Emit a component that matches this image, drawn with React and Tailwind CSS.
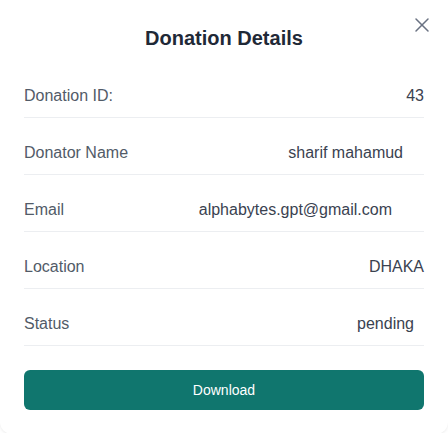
import React from 'react';
import { X } from 'lucide-react';

const rows = [
  { label: 'Donation ID:', value: '43', pad: 'mr-0' },
  { label: 'Donator Name', value: 'sharif mahamud', pad: 'mr-[21px]' },
  { label: 'Email', value: 'alphabytes.gpt@gmail.com', pad: 'mr-[32px]' },
  { label: 'Location', value: 'DHAKA', pad: 'mr-0' },
  { label: 'Status', value: 'pending', pad: 'mr-[10px]' },
];

export default function App() {
  return (
    <div className="min-h-screen w-full bg-white font-['Liberation_Sans',Arial,sans-serif]">
      <div className="relative w-[448px] bg-white rounded-b-xl shadow-[0_1px_3px_rgba(0,0,0,0.08)] px-6 pt-6 pb-6">
        {/* Close button */}
        <button type="button" className="absolute right-[14px] top-[13px] text-gray-500">
          <X className="h-6 w-6" strokeWidth={1.5} />
        </button>

        <h2 className="text-xl leading-7 font-bold text-[#1f2937] text-center">Donation Details</h2>

        <div className="mt-[32px] flex flex-col gap-[23px]">
          {rows.map((row) => (
            <div key={row.label} className="flex items-center justify-between pb-[9px] border-b border-[#eceef1] text-base leading-6">
              <span className="text-[#525b68]">{row.label}</span>
              <span className={`text-[#3a4250] ${row.pad}`}>{row.value}</span>
            </div>
          ))}
        </div>

        <button type="button" className="mt-6 w-full h-10 rounded-md bg-[#10766e] text-white text-sm">
          Download
        </button>
      </div>
    </div>
  );
}
